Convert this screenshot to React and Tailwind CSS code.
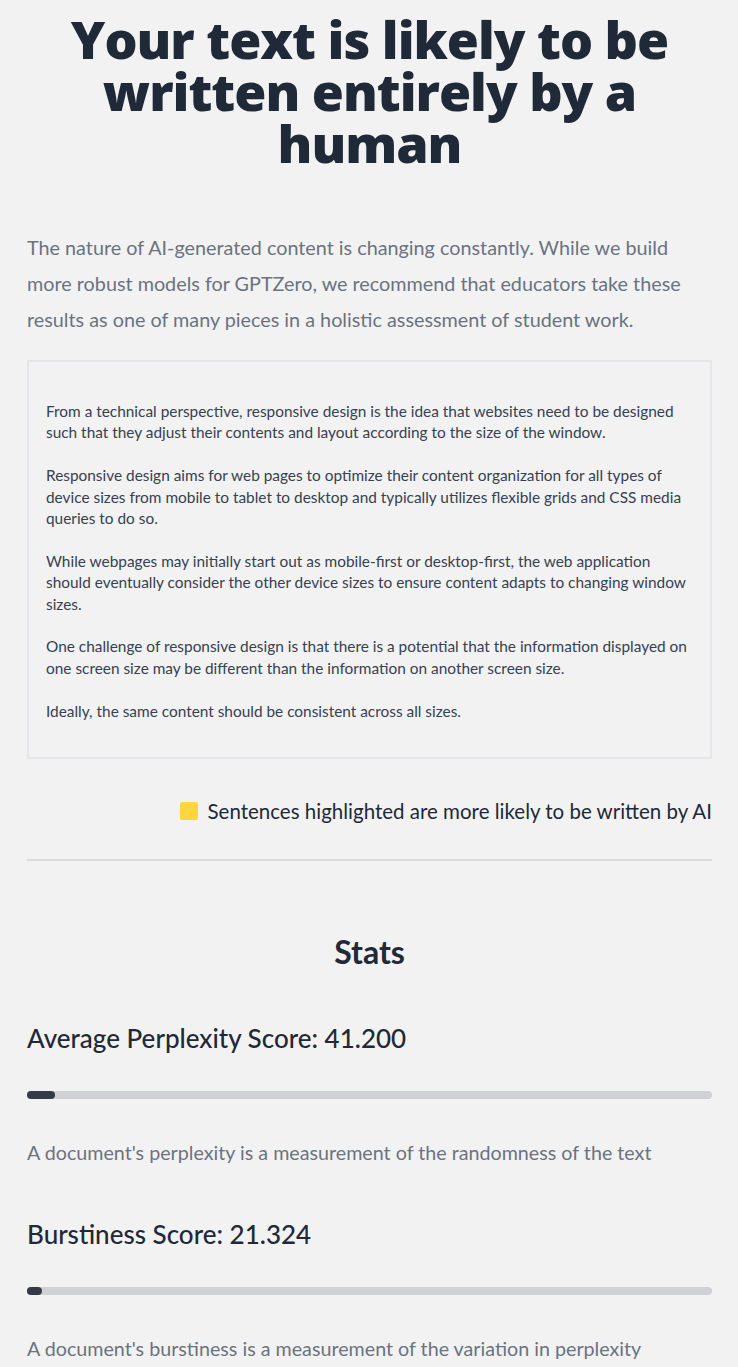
const SAMPLE = [
  'From a technical perspective, responsive design is the idea that websites need to be designed such that they adjust their contents and layout according to the size of the window.',
  'Responsive design aims for web pages to optimize their content organization for all types of device sizes from mobile to tablet to desktop and typically utilizes flexible grids and CSS media queries to do so.',
  'While webpages may initially start out as mobile-first or desktop-first, the web application should eventually consider the other device sizes to ensure content adapts to changing window sizes.',
  'One challenge of responsive design is that there is a potential that the information displayed on one screen size may be different than the information on another screen size.',
  'Ideally, the same content should be consistent across all sizes.',
];

const STATS = [
  {
    label: 'Average Perplexity Score: 41.200',
    fill: 28,
    desc: "A document's perplexity is a measurement of the randomness of the text",
  },
  {
    label: 'Burstiness Score: 21.324',
    fill: 15,
    desc: "A document's burstiness is a measurement of the variation in perplexity",
  },
];

function StatRow({ label, fill, desc, first }) {
  return (
    <div className={first ? 'mt-[52px]' : 'mt-[51px]'}>
      <h3 className="text-[26px] leading-[32px] font-medium text-[#1f2937]">{label}</h3>
      <div className="mt-[37px] h-[8px] w-full rounded-full bg-[#cfd1d4]">
        <div className="h-full rounded-full bg-[#343a46]" style={{ width: fill }} />
      </div>
      <p className="mt-[40px] text-[19.7px] leading-[28px] text-[#6b7280]">{desc}</p>
    </div>
  );
}

export default function App() {
  return (
    <div className="min-h-screen bg-[#f2f2f2] pl-[27px] pr-[26px] pt-[13px] pb-[20px] font-['Lato','Noto_Sans',sans-serif]">
      <h1 className="text-center font-['Open_Sans','Noto_Sans',sans-serif] text-[52px] leading-[52px] font-extrabold text-[#1f2937] tracking-[-1px]">
        Your text is likely to be written entirely by a human
      </h1>

      <p className="mt-[60px] text-[19.8px] leading-[36px] text-[#6b7280]">
        The nature of AI-generated content is changing constantly. While we build more robust models for GPTZero, we recommend that educators take these results as one of many pieces in a holistic assessment of student work.
      </p>

      {/* analysed text */}
      <div className="mt-[23px] border-2 border-[#e5e6e9] pt-[39px] pb-[35px] px-[17px] text-[15.4px] leading-[21.4px] text-[#374151] space-y-[21.4px]">
        {SAMPLE.map((t, i) => (
          <p key={i}>{t}</p>
        ))}
      </div>

      <div className="mt-[38px] flex items-center justify-end gap-[10px]">
        <span className="h-[18px] w-[18px] rounded-[2px] bg-[#fdd53d]" />
        <span className="text-[20.5px] leading-[28px] text-[#1f2937]">
          Sentences highlighted are more likely to be written by AI
        </span>
      </div>

      <hr className="mt-[34px] border-0 h-[2px] bg-[#dcdcde]" />

      <h2 className="mt-[73px] text-center text-[32px] leading-[36px] font-bold text-[#1f2937]">Stats</h2>

      {STATS.map((s, i) => (
        <StatRow key={s.label} {...s} first={i === 0} />
      ))}
    </div>
  );
}
